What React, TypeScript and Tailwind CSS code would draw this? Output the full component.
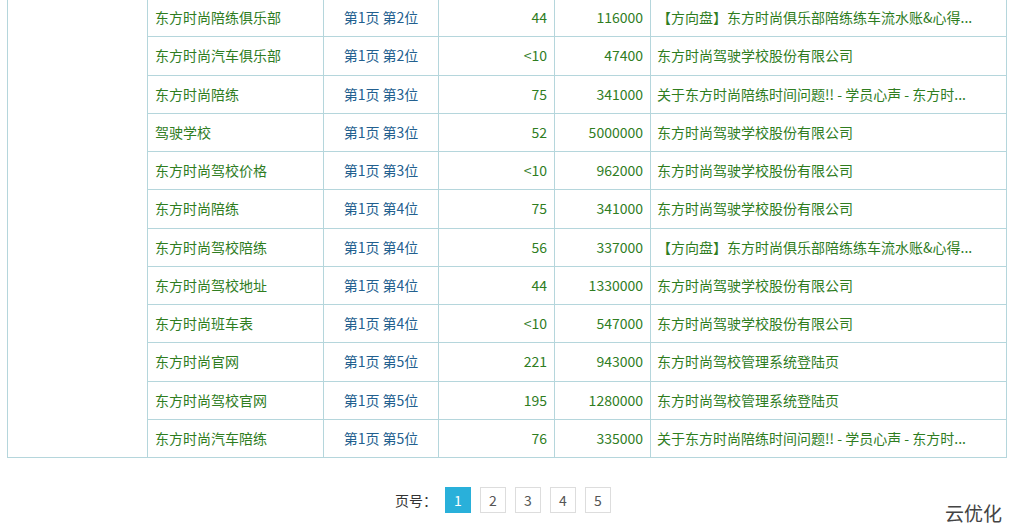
import React from "react";

const rows: [string, string, string, string, string][] = [
  ["东方时尚陪练俱乐部", "第1页 第2位", "44", "116000", "【方向盘】东方时尚俱乐部陪练练车流水账&心得..."],
  ["东方时尚汽车俱乐部", "第1页 第2位", "<10", "47400", "东方时尚驾驶学校股份有限公司"],
  ["东方时尚陪练", "第1页 第3位", "75", "341000", "关于东方时尚陪练时间问题!! - 学员心声 - 东方时..."],
  ["驾驶学校", "第1页 第3位", "52", "5000000", "东方时尚驾驶学校股份有限公司"],
  ["东方时尚驾校价格", "第1页 第3位", "<10", "962000", "东方时尚驾驶学校股份有限公司"],
  ["东方时尚陪练", "第1页 第4位", "75", "341000", "东方时尚驾驶学校股份有限公司"],
  ["东方时尚驾校陪练", "第1页 第4位", "56", "337000", "【方向盘】东方时尚俱乐部陪练练车流水账&心得..."],
  ["东方时尚驾校地址", "第1页 第4位", "44", "1330000", "东方时尚驾驶学校股份有限公司"],
  ["东方时尚班车表", "第1页 第4位", "<10", "547000", "东方时尚驾驶学校股份有限公司"],
  ["东方时尚官网", "第1页 第5位", "221", "943000", "东方时尚驾校管理系统登陆页"],
  ["东方时尚驾校官网", "第1页 第5位", "195", "1280000", "东方时尚驾校管理系统登陆页"],
  ["东方时尚汽车陪练", "第1页 第5位", "76", "335000", "关于东方时尚陪练时间问题!! - 学员心声 - 东方时..."],
];

const font = { fontFamily: '"Microsoft YaHei","Noto Sans CJK SC",sans-serif' };
const td = "border border-[#b5d6dc] h-[38.25px] p-0 text-[14px]";

export default function App() {
  return (
    <div className="w-[1012px] h-[528px] bg-white overflow-hidden" style={font}>
      <table className="border-collapse ml-[7px] -mt-[2px] table-fixed w-[999px]">
        <colgroup>
          <col className="w-[140px]" />
          <col className="w-[176px]" />
          <col className="w-[115px]" />
          <col className="w-[116px]" />
          <col className="w-[96px]" />
          <col className="w-[356px]" />
        </colgroup>
        <tbody>
          {rows.map((r, i) => (
            <tr key={i}>
              {i === 0 && <td rowSpan={12} className={td}></td>}
              <td className={`${td} pl-[7px] text-[#2f7d1f]`}>{r[0]}</td>
              <td className={`${td} text-center text-[#23608f]`}>{r[1]}</td>
              <td className={`${td} text-right pr-[7px] text-[#2f7d1f]`}>{r[2]}</td>
              <td className={`${td} text-right pr-[7px] text-[#2f7d1f]`}>{r[3]}</td>
              <td className={`${td} pl-[6px] text-[#2f7d1f] whitespace-nowrap overflow-hidden`}>{r[4]}</td>
            </tr>
          ))}
        </tbody>
      </table>
      <div className="relative flex items-center justify-center gap-[9px] mt-[29px] pr-[6px]">
        <span className="text-[14px] text-[#333] mr-[-1px]">页号：</span>
        {[1, 2, 3, 4, 5].map((n) => (
          <span
            key={n}
            className={
              n === 1
                ? "w-[26px] h-[26px] flex items-center justify-center bg-[#29b0da] text-white text-[14px]"
                : "w-[26px] h-[26px] flex items-center justify-center border border-[#ddd] text-[#555] text-[14px]"
            }
          >
            {n}
          </span>
        ))}
        <span className="absolute right-[10px] top-[12px] text-[19px] text-[#444]">云优化</span>
      </div>
    </div>
  );
}
